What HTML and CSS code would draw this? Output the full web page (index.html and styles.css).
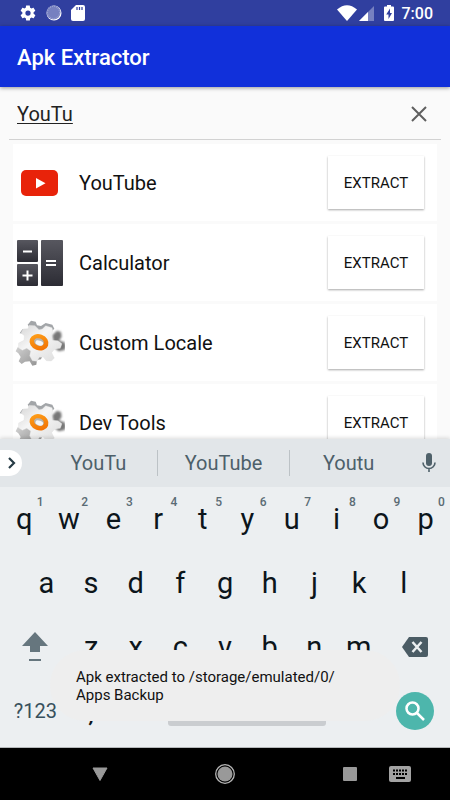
FILE: index.html
```html
<!DOCTYPE html>
<html lang="en">
<head>
  <meta charset="utf-8">
  <meta name="viewport" content="width=device-width, initial-scale=1">
  <title>Apk Extractor</title>
  <link rel="stylesheet" href="styles.css">
</head>
<body>

<svg class="defs" aria-hidden="true">
  <defs>
    <linearGradient id="metal" x1="0" y1="0" x2="1" y2="1">
      <stop offset="0" stop-color="#d4d4d4"/>
      <stop offset="0.4" stop-color="#f6f6f6"/>
      <stop offset="1" stop-color="#dcdcdc"/>
    </linearGradient>
    <linearGradient id="steel" x1="0" y1="0" x2="1" y2="1">
      <stop offset="0" stop-color="#d8d8d8"/>
      <stop offset="1" stop-color="#8c8c8c"/>
    </linearGradient>
    <linearGradient id="orange" x1="0" y1="0" x2="1" y2="1">
      <stop offset="0" stop-color="#ffa51c"/>
      <stop offset="1" stop-color="#f06a00"/>
    </linearGradient>
    <linearGradient id="dark" x1="0" y1="0" x2="0" y2="1">
      <stop offset="0" stop-color="#57575f"/>
      <stop offset="1" stop-color="#2c2c34"/>
    </linearGradient>
    <filter id="soft" x="-30%" y="-30%" width="160%" height="160%"><feGaussianBlur stdDeviation="3"/></filter>
    <symbol id="gears" viewBox="0 0 150 150">
      <path filter="url(#soft)" fill="#777" d="M112 52l14-14 12 4 2 14-8 12 16 4 5 12-4 12-18 4-12-10z"/>
      <path fill="url(#steel)" d="M2 100l6-12 14-2 8-12 30 10 22 30-4 10-12 2-2 14-12 3-8-13-14 1-10 7-9-8 6-13-7-11z"/>
      <path fill="#a2a5a8" d="M38 20l10-12 14 3 4 11 12 2 14-9 20 5 6 12-10 10-60-6zM14 46l8-12 18 1 4 12z"/>
      <path fill="url(#metal)" stroke="#ddd" stroke-width="1" d="M42 22l18 1 12 12 10-2 10-10 19 6 3 10-8 16 6 12 17 1 12 9-5 14-18 3-8 10 8 16-9 9-15-1-9-11-12 1-7 12-14-2-8-15 3-14-12-8-13 6-12-8 1-14 16-8 1-14-10-8 6-12 15-1z"/>
      <ellipse cx="72" cy="73" rx="29" ry="24" transform="rotate(20 72 73)" fill="url(#orange)"/>
      <ellipse cx="72" cy="72" rx="15" ry="11" transform="rotate(20 72 72)" fill="#b4b4b4"/>
      <ellipse cx="73" cy="75" rx="12" ry="7" transform="rotate(20 73 75)" fill="#f4f4f4"/>
    </symbol>
  </defs>
</svg>

<div class="status">
  <svg width="18" height="18" viewBox="0 0 24 24" fill="#fff"><path d="M19.4 13c0-.3.1-.6.1-1s0-.7-.1-1l2.100-1.700c.2-.1.2-.4.1-.6l-2-3.500c-.1-.2-.4-.3-.6-.2l-2.500 1c-.5-.4-1.100-.7-1.700-1l-.4-2.600c0-.2-.2-.4-.5-.4h-4c-.2 0-.4.2-.5.4l-.4 2.600c-.6.300-1.200.600-1.700 1L4.900 5c-.2-.1-.5 0-.6.200l-2 3.500c-.1.200-.1.500.1.600L4.500 11c0 .3-.1.700-.1 1s0 .7.1 1l-2.100 1.700c-.2.100-.2.400-.1.600l2 3.500c.1.200.4.300.6.200l2.500-1c.5.400 1.100.700 1.700 1l.4 2.600c0 .2.200.4.500.4h4c.3 0 .5-.2.500-.4l.4-2.600c.6-.3 1.200-.6 1.700-1l2.500 1c.2.100.5 0 .6-.2l2-3.500c.1-.2.1-.5-.1-.6L19.400 13zM12 15.500a3.500 3.500 0 110-7 3.500 3.500 0 010 7z"/></svg>
  <svg width="16" height="16" viewBox="0 0 16 16"><circle cx="8" cy="8" r="7.500" fill="#fff"/><circle cx="7.500" cy="7.500" r="7" fill="#7680c0"/><circle cx="7.500" cy="7.500" r="6" fill="none" stroke="#a9b0da" stroke-dasharray="1 1"/></svg>
  <svg width="14" height="16" viewBox="0 0 14 16"><path fill="#fff" d="M5 0h7q2 0 2 2v12q0 2-2 2H2q-2 0-2-2V5z"/><path stroke="#303f9f" stroke-width="1.200" d="M6 2v3M8.500 2v3M11 2v3"/></svg>
  <div class="status-right">
    <svg width="20" height="16" viewBox="0 0 20 16"><path fill="#fff" d="M0 4.500Q10-4 20 4.500L10 16z"/></svg>
    <svg width="15" height="15" viewBox="0 0 15 15"><path fill="#7680c0" d="M15 0v15H0z"/><path fill="#fff" d="M9 6v9H0z"/></svg>
    <svg class="battery" width="10" height="16" viewBox="0 0 10 16"><path fill="#fff" d="M3 0h4v1.500h2q1 0 1 1V15q0 1-1 1H1q-1 0-1-1V2.500q0-1 1-1h2z"/><path fill="#303f9f" d="M6 3.500L2.200 9.500h2.300V14L8 8H6z"/></svg>
    <span>7:00</span>
  </div>
</div>

<header class="appbar"><h1>Apk Extractor</h1></header>

<main class="content">
  <form class="search">
    <input type="text" value="YouTu" aria-label="Search apps" spellcheck="false">
    <button type="button" aria-label="Clear"><svg width="16" height="16" viewBox="0 0 16 16" stroke="#5f5f5f" stroke-width="2"><path d="M1 1l14 14M15 1L1 15"/></svg></button>
  </form>
  <ul class="apps">
    <li>
      <svg width="50" height="50" viewBox="0 0 50 50"><rect x="6" y="12" width="37" height="26" rx="5" fill="#e8230a"/><path fill="#fff" d="M21 20v10.500l9.500-5.200z"/></svg>
      <span>YouTube</span>
      <button>EXTRACT</button>
    </li>
    <li>
      <svg width="50" height="50" viewBox="0 0 50 50"><g fill="url(#dark)"><rect x="2" y="2" width="21" height="22" rx="1"/><rect x="2" y="26" width="21" height="22" rx="1"/><rect x="26" y="2" width="22" height="46" rx="1"/></g><path stroke="#fff" stroke-width="2" d="M8 13.500h9M7.500 37.500h10M12.500 32.500v10M31 23h10M31 27h10"/></svg>
      <span>Calculator</span>
      <button>EXTRACT</button>
    </li>
    <li>
      <svg width="50" height="50"><use href="#gears"/></svg>
      <span>Custom Locale</span>
      <button>EXTRACT</button>
    </li>
    <li>
      <svg width="50" height="50"><use href="#gears"/></svg>
      <span>Dev Tools</span>
      <button>EXTRACT</button>
    </li>
  </ul>
</main>

<section class="keyboard" aria-label="Keyboard">
  <div class="suggestions">
    <button class="expand" aria-label="More"><svg width="8" height="12" viewBox="0 0 8 12" fill="none" stroke="#263b45" stroke-width="2.200"><path d="M1 1l5 5-5 5"/></svg></button>
    <div class="words">
      <button>YouTu</button>
      <button>YouTube</button>
      <button>Youtu</button>
    </div>
    <button class="mic" aria-label="Voice input"><svg width="14" height="20" viewBox="0 0 14 20"><rect x="4" y="0" width="6" height="13" rx="3" fill="#4f616a"/><path fill="none" stroke="#4f616a" stroke-width="1.600" d="M1 9.500a6 6 0 0012 0M7 15.500V19"/></svg></button>
  </div>
  <div class="row">
    <button>q<sup>1</sup></button>
    <button>w<sup>2</sup></button>
    <button>e<sup>3</sup></button>
    <button>r<sup>4</sup></button>
    <button>t<sup>5</sup></button>
    <button>y<sup>6</sup></button>
    <button>u<sup>7</sup></button>
    <button>i<sup>8</sup></button>
    <button>o<sup>9</sup></button>
    <button>p<sup>0</sup></button>
  </div>
  <div class="row middle">
    <button>a</button>
    <button>s</button>
    <button>d</button>
    <button>f</button>
    <button>g</button>
    <button>h</button>
    <button>j</button>
    <button>k</button>
    <button>l</button>
  </div>
  <div class="row">
    <button class="wide" aria-label="Shift"><svg width="26" height="30" viewBox="0 0 26 30" fill="#66767e"><path d="M13 0l13 14h-8v6H8v-6H0zM7 27h12v2H7z"/></svg></button>
    <button>z</button>
    <button>x</button>
    <button>c</button>
    <button>v</button>
    <button>b</button>
    <button>n</button>
    <button>m</button>
    <button class="wide" aria-label="Backspace"><svg width="26" height="20" viewBox="0 0 26 20"><path fill="#4b5c65" d="M7 0h17q2 0 2 2v16q0 2-2 2H7L0 10z"/><path stroke="#eceff1" stroke-width="2.500" d="M10.500 5l9 10M19.500 5l-9 10"/></svg></button>
  </div>
  <div class="row">
    <button class="wide symbols">?123</button>
    <button>,</button>
    <button aria-label="Emoji"><svg width="20" height="20" viewBox="0 0 20 20" fill="none" stroke="#66767e" stroke-width="2"><circle cx="10" cy="10" r="9"/><path d="M6 12q4 4 8 0"/></svg></button>
    <button class="space" aria-label="Space"></button>
    <button>.</button>
    <button class="wide" aria-label="Search"><span class="go"><svg width="20" height="20" viewBox="0 0 20 20" fill="none" stroke="#fff" stroke-width="2.500"><circle cx="7.500" cy="7.500" r="6"/><path d="M12 12l7 7"/></svg></span></button>
  </div>
  <div class="toast" role="status">Apk extracted to /storage/emulated/0/<br>Apps Backup</div>
</section>

<nav class="navbar">
  <button aria-label="Hide keyboard"><svg width="16" height="14" viewBox="0 0 16 14"><path fill="#999" d="M1 1h14L8 13.500z" stroke="#999"/></svg></button>
  <button aria-label="Home"><svg width="20" height="20" viewBox="0 0 20 20"><circle cx="10" cy="10" r="9.300" fill="none" stroke="#b5b5b5" stroke-width="1.300"/><circle cx="10" cy="10" r="7.500" fill="#999"/></svg></button>
  <div class="nav-end">
    <button aria-label="Recent apps"><svg width="14" height="14" viewBox="0 0 14 14"><rect width="14" height="14" rx="1" fill="#999"/></svg></button>
    <button aria-label="Switch keyboard"><svg width="22" height="16" viewBox="0 0 22 16"><rect width="22" height="16" rx="2" fill="#a3a3a3"/><path stroke="#000" stroke-width="2" stroke-dasharray="2 1" d="M4 4.500h15M4 8h15"/><path stroke="#000" stroke-width="2" d="M7 12h9"/></svg></button>
  </div>
</nav>

</body>
</html>
```
FILE: styles.css
```css
* {
  box-sizing: border-box;
  margin: 0;
  padding: 0;
}
body {
  display: flex;
  flex-direction: column;
  height: 100vh;
  overflow: hidden;
  background: #fafafa;
  color: #111;
  font-family: Roboto, sans-serif;
}
button {
  border: 0;
  background: none;
  color: inherit;
  font: inherit;
}
svg {
  display: block;
  flex: none;
}
.defs {
  position: absolute;
  width: 0;
  height: 0;
}

/* top bars */
.status {
  display: flex;
  flex: none;
  align-items: center;
  gap: 9px;
  height: 26px;
  padding: 0 17px 0 19px;
  background: #303f9f;
  color: #fff;
  font-size: 16px;
  font-weight: 500;
}
.status-right {
  display: flex;
  align-items: center;
  gap: 2px;
  margin-left: auto;
}
.battery {
  margin: 0 6px 0 8px;
}
.appbar {
  display: flex;
  flex: none;
  align-items: center;
  height: 61px;
  padding: 2px 17px 0;
  background: #1130da;
  box-shadow: 0 1px 4px rgba(0,0,0,0.4);
  color: #fff;
  z-index: 1;
}
.appbar h1 {
  font-size: 22px;
  font-weight: 500;
}

/* app list */
.content {
  flex: 1;
  min-height: 0;
  overflow: hidden;
}
.search {
  display: flex;
  align-items: center;
  height: 53px;
  margin: 0 9px 4px;
  padding: 2px 14px 0 8px;
  border-bottom: 1px solid #d2d2d2;
}
.search input {
  flex: 1;
  min-width: 0;
  border: 0;
  outline: 0;
  background: none;
  color: #222;
  font: 20px Roboto, sans-serif;
  text-decoration: underline;
  text-decoration-thickness: 1px;
  text-underline-offset: 2px;
}
.apps {
  display: flex;
  flex-direction: column;
  gap: 3px;
  margin: 0 13px;
  list-style: none;
}
.apps li {
  display: flex;
  align-items: center;
  height: 77px;
  padding: 0 13px 0 2px;
  background: #fff;
}
.apps span {
  flex: 1;
  margin-left: 14px;
  font-size: 20px;
}
.apps button {
  width: 96px;
  height: 53px;
  background: #fff;
  box-shadow: 0 1px 2px rgba(0,0,0,0.35);
  font-size: 15px;
}

/* keyboard */
.keyboard {
  position: relative;
  display: flex;
  flex: none;
  flex-direction: column;
  padding-bottom: 4px;
  border-bottom: 1px solid #b5b8ba;
  background: #eceff1;
  box-shadow: 0 -1px 4px rgba(0,0,0,0.15);
}
.suggestions {
  display: flex;
  align-items: center;
  height: 48px;
  background: #e2e6e9;
}
.expand {
  width: 22px;
  height: 26px;
  padding-left: 8px;
  border-radius: 0 13px 13px 0;
  background: #fff;
}
.words {
  display: flex;
  flex: 1;
  margin-left: 18px;
}
.words button {
  flex: 8;
  height: 26px;
  color: #4d606a;
  font-size: 20px;
}
.words button:nth-child(2) {
  flex: 9;
}
.words button + button {
  border-left: 1px solid #bcc2c6;
}
.mic {
  display: flex;
  justify-content: center;
  width: 43px;
}
.row {
  display: flex;
  height: 64px;
  padding: 0 2px;
}
.row button {
  position: relative;
  display: flex;
  flex: 1;
  align-items: center;
  justify-content: center;
  color: #0c151b;
  font-size: 29px;
}
.row sup {
  position: absolute;
  top: 8px;
  right: 3px;
  color: #5a6b74;
  font-size: 12px;
  font-weight: 500;
}
.middle {
  padding: 0 24px;
}
.row .wide {
  flex: 1.5;
}
.row .symbols {
  color: #37505c;
  font-size: 20px;
}
.row .space {
  flex: 4;
}
.space::before {
  content: "";
  width: 158px;
  height: 30px;
  border-radius: 3px;
  background: #cacdd0;
}
.go {
  display: flex;
  align-items: center;
  justify-content: center;
  width: 38px;
  height: 38px;
  border-radius: 50%;
  background: #4db6ac;
}
.toast {
  position: absolute;
  right: 50px;
  bottom: 26px;
  left: 50px;
  padding: 18px 26px 17px;
  border-radius: 35px;
  background: #eee;
  color: #111;
  font-size: 15px;
  line-height: 18px;
}

/* system navigation */
.navbar {
  display: grid;
  flex: none;
  grid-template-columns: 1fr 50px 1fr;
  place-items: center;
  height: 52px;
  background: #000;
}
.nav-end {
  display: flex;
  align-items: center;
  gap: 32px;
  margin-left: 54px;
}
```
